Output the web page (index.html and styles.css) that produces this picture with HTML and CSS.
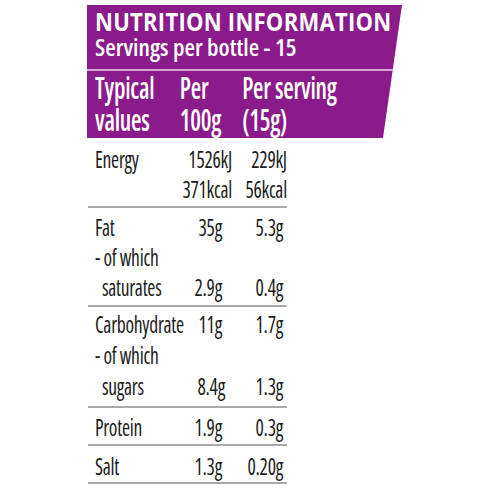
FILE: index.html
```html
<!DOCTYPE html>
<html lang="en">
<head>
<meta charset="utf-8">
<title>Nutrition information</title>
<link rel="stylesheet" href="styles.css">
</head>
<body>
<div class="label">
  <div class="head">
    <div class="head-top">
      <div class="title">NUTRITION INFORMATION</div>
      <div class="servings">Servings per bottle - 15</div>
    </div>
    <div class="head-cols">
      <div class="hc hc1">Typical<br>values</div>
      <div class="hc hc2">Per<br>100g</div>
      <div class="hc hc3">Per serving<br>(15g)</div>
    </div>
  </div>
  <div class="table">
    <div class="sec sec-energy">
      <div class="row"><span class="lab">Energy</span><span class="v1">1526kJ</span><span class="v2">229kJ</span></div>
      <div class="row"><span class="lab"></span><span class="v1">371kcal</span><span class="v2">56kcal</span></div>
    </div>
    <div class="sec sec-fat">
      <div class="row"><span class="lab">Fat</span><span class="v1">35g</span><span class="v2">5.3g</span></div>
      <div class="row"><span class="lab">- of which</span><span class="v1"></span><span class="v2"></span></div>
      <div class="row"><span class="lab sub">saturates</span><span class="v1">2.9g</span><span class="v2">0.4g</span></div>
    </div>
    <div class="sec sec-carb">
      <div class="row"><span class="lab">Carbohydrate</span><span class="v1">11g</span><span class="v2">1.7g</span></div>
      <div class="row"><span class="lab">- of which</span><span class="v1"></span><span class="v2"></span></div>
      <div class="row"><span class="lab sub">sugars</span><span class="v1 v1-wide">8.4g</span><span class="v2">1.3g</span></div>
    </div>
    <div class="sec sec-protein">
      <div class="row"><span class="lab">Protein</span><span class="v1">1.9g</span><span class="v2">0.3g</span></div>
    </div>
    <div class="sec sec-salt">
      <div class="row"><span class="lab">Salt</span><span class="v1">1.3g</span><span class="v2">0.20g</span></div>
    </div>
  </div>
</div>
</body>
</html>
```
FILE: styles.css
```css
html, body {
  margin: 0;
  padding: 0;
  background: #ffffff;
}

body {
  font-family: "Open Sans", "Liberation Sans", sans-serif;
  font-stretch: 75%;
  color: #1c1c1c;
}

.label {
  margin: 5px 0 0 87px;
  width: 315px;
}

/* purple header with slanted right edge */
.head {
  background: #8b1b8a;
  color: #ffffff;
  clip-path: polygon(0 0, 100% 0, calc(100% - 19px) 100%, 0 100%);
  height: 133px;
  display: flex;
  flex-direction: column;
}

.head-top {
  padding: 3px 0 0 8px;
  height: 61px;
  border-bottom: 2px solid #d9a9d8;
}

.title {
  font-size: 25px;
  font-weight: 700;
  font-stretch: 100%;
  line-height: 26px;
  letter-spacing: 0.3px;
  white-space: nowrap;
  transform: scaleX(0.88);
  transform-origin: 0 0;
}

.servings {
  font-size: 24px;
  font-weight: 600;
  line-height: 26px;
  white-space: nowrap;
}

.head-cols {
  display: flex;
  padding: 1px 0 0 10px;
  font-size: 30px;
  font-weight: 600;
  line-height: 32px;
  letter-spacing: -0.3px;
  white-space: nowrap;
  transform: scaleX(0.8);
  transform-origin: 0 0;
}

.hc1 { width: 106px; flex: none; }
.hc2 { width: 78px; flex: none; }
.hc3 { flex: none; }

/* body table: laid out wide, then compressed horizontally to the condensed face */
.table {
  margin-left: 1px;
  width: 234px;
  font-size: 23px;
  letter-spacing: -0.3px;
  transform: scaleX(0.85);
  transform-origin: 0 0;
}

.sec {
  border-bottom: 2px solid #a9a9a9;
  padding: 4px 0 4px;
}

.row {
  display: flex;
  line-height: 30px;
  height: 30px;
  padding: 0 4.6px 0 8.2px;
  white-space: nowrap;
}

.lab {
  flex: 1;
  min-width: 0;
}

.lab.sub {
  padding-left: 8.2px;
}

.v1 {
  flex: none;
  width: 70px;
  text-align: right;
}

.v1-wide {
  margin-right: -3.5px;
  width: 73.5px;
}

.v2 {
  flex: none;
  width: 71.8px;
  text-align: right;
}

.sec-energy {
  padding: 6px 0 2px;
}

.sec-energy .row {
  padding-right: 0;
}

.sec-energy .v2 {
  width: 64.6px;
}

.sec-fat {
  padding: 4px 0 3px;
}

.sec-carb {
  padding: 2px 0 4px;
}

.sec-carb .row {
  line-height: 31px;
  height: 31px;
}

.sec-protein {
  padding: 4px 0 2px;
}

.sec-salt {
  padding: 5px 0 1px;
}
```
